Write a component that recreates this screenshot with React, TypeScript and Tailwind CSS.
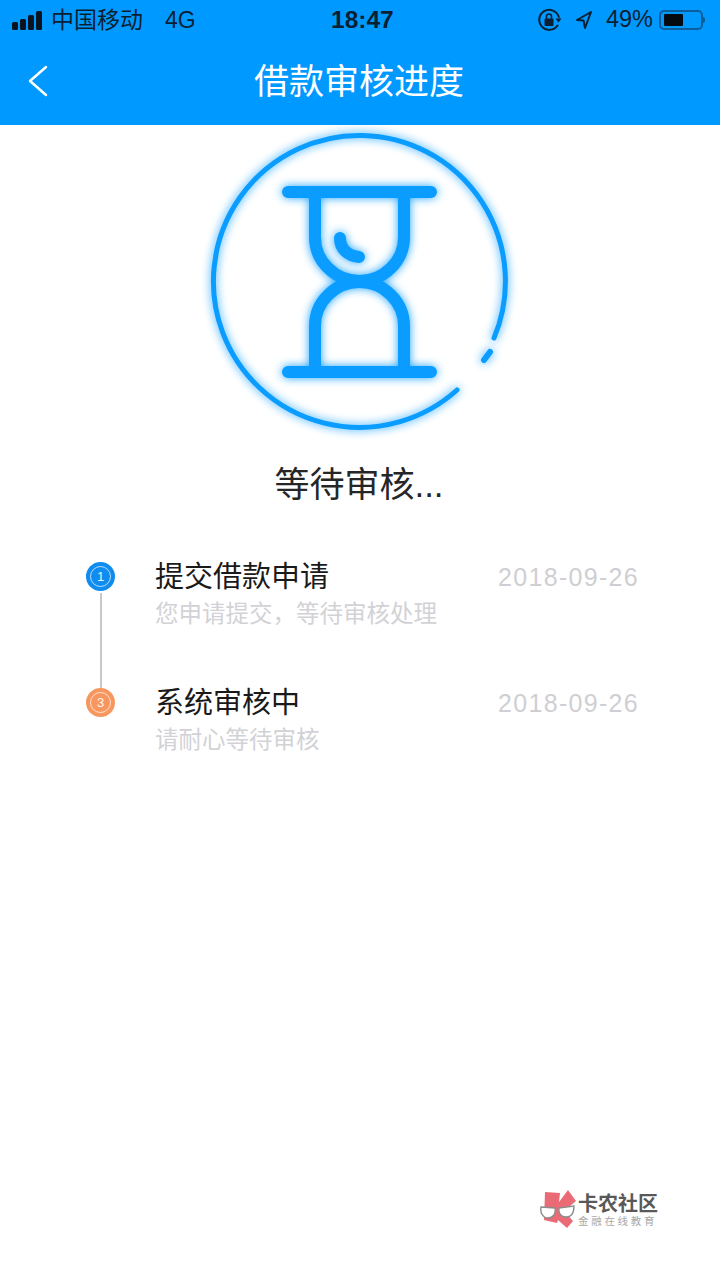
import React from "react";

const steps = [
  { n: "1", title: "提交借款申请", sub: "您申请提交，等待审核处理", date: "2018-09-26", color: "bg-[#0f8cf0]" },
  { n: "3", title: "系统审核中", sub: "请耐心等待审核", date: "2018-09-26", color: "bg-[#f7975f]" },
];

function StatusBar() {
  return (
    <div className="relative flex h-[40px] items-center pl-[12px] pr-[15px] text-[#0b1f33]">
      <div className="flex h-[19px] w-[32px] items-end gap-[2px]">
        <div className="h-[8px] w-[6px] rounded-[1.5px] bg-[#0a1420]" />
        <div className="h-[11px] w-[6px] rounded-[1.5px] bg-[#0a1420]" />
        <div className="h-[15px] w-[6px] rounded-[1.5px] bg-[#0a1420]" />
        <div className="h-[19px] w-[6px] rounded-[1.5px] bg-[#0a1420]" />
      </div>
      <span className="ml-[7px] text-[23px] leading-none">中国移动</span>
      <span className="ml-[22px] text-[23px] leading-none">4G</span>
      <span className="absolute left-[331px] text-[24.500px] font-bold leading-none">18:47</span>
      <div className="ml-auto flex items-center">
        <svg width="24" height="24" viewBox="0 0 24 24" fill="none" stroke="#0a1f33" strokeWidth="2">
          <path d="M19.500 17.500A10 10 0 1 1 20.800 9" strokeLinecap="round" />
          <path d="M17.500 10.500h6l-3 4z" fill="#0a1f33" stroke="none" />
          <rect x="6.500" y="10.500" width="9" height="7.500" rx="1" fill="#0a1f33" stroke="none" />
          <path d="M8.500 11V8.500a2.500 2.500 0 0 1 5 0V11" strokeWidth="1.600" />
        </svg>
        <svg className="ml-[13px]" width="18" height="20" viewBox="0 0 18 20" fill="none" stroke="#0a1f33" strokeWidth="2" strokeLinejoin="round">
          <path d="M16 2L2 10L8.500 10.500L10 18z" />
        </svg>
        <span className="ml-[13px] text-[23.500px] leading-none">49%</span>
        <div className="ml-[6px] flex h-[20px] w-[44px] items-center rounded-[5px] border-2 border-[#0b5f9c] px-[3px]">
          <div className="h-[12px] w-[19px] rounded-[1px] bg-[#050a10]" />
        </div>
        <div className="h-[6px] w-[2px] rounded-r-sm bg-[#0b5f9c]" />
      </div>
    </div>
  );
}

function Hourglass() {
  return (
    <svg
      className="drop-shadow-[0_0_5px_#1fa5ff]"
      width="320"
      height="320"
      viewBox="0 0 320 320"
      fill="none"
      stroke="#0a9dff"
      strokeLinecap="round"
    >
      <path d="M294 213A146 146 0 1 0 257 265" strokeWidth="5" />
      <path d="M284 235L290 227" strokeWidth="6" />
      <path d="M88 67H231M88 247H231" strokeWidth="12" />
      <path d="M115 67V112A44.500 44 0 0 0 204 112V67" strokeWidth="12" />
      <path d="M115 247V201A44.500 44 0 0 1 204 201V247" strokeWidth="12" />
      <path d="M140 113C140 124 148 131 159 132" strokeWidth="12" />
    </svg>
  );
}

function Logo() {
  return (
    <div className="mr-[62px] mt-auto mb-[48px] flex items-center self-end">
      <svg width="38" height="45" viewBox="5 0 38 45">
        <path d="M10 5L25 6L24 15L33 3L41 14L29 24L38 34L32 41L23 33L22 36L9 33z" fill="#ea6b76" />
        <path d="M6 20L20 21C21 27 18 31 13 31C8 31 5 26 6 20z" fill="#fff" stroke="#8c8c8c" strokeWidth="1.400" />
        <path d="M24 21L39 19C39 26 36 30 31 30C26 30 23 26 24 21z" fill="#fff" stroke="#8c8c8c" strokeWidth="1.400" />
      </svg>
      <div className="flex flex-col">
        <span className="text-[20px] font-bold leading-[22px] text-[#595959]">卡农社区</span>
        <span className="text-[10.500px] leading-[12px] tracking-[2.700px] text-[#a8a8a8]">金融在线教育</span>
      </div>
    </div>
  );
}

export default function App() {
  return (
    <div className="flex h-[1280px] w-[720px] flex-col overflow-hidden bg-white font-['Liberation_Sans','Noto_Sans_CJK_SC',sans-serif]">
      <header className="h-[125px] bg-[#0099ff]">
        <StatusBar />
        <div className="relative flex h-[85px] items-center justify-center pb-[2px]">
          <svg className="absolute left-[26px] top-[24px]" width="24" height="34" viewBox="0 0 24 34" fill="none" stroke="#fff" strokeWidth="2.500" strokeLinecap="round" strokeLinejoin="round">
            <path d="M20 3L4 17L20 31" />
          </svg>
          <h1 className="pr-[2px] text-[35px] font-normal leading-none text-white">借款审核进度</h1>
        </div>
      </header>

      <div className="flex justify-center">
        <Hourglass />
      </div>

      <p className="mt-[18px] pr-[2px] text-center text-[35px] leading-[44px] text-[#262626]">等待审核...</p>

      <div className="mt-[55px] flex flex-col pl-[86px] pr-[81px]">
        {steps.map((s, i) => (
          <div key={s.n} className="flex h-[126px]">
            <div className="flex w-[29px] flex-col items-center">
              <div className={`flex h-[29px] w-[29px] shrink-0 items-center justify-center rounded-full ${s.color}`}>
                <div className="flex h-[21px] w-[21px] items-center justify-center rounded-full border border-white/70 text-[13px] leading-none text-white/90">
                  {s.n}
                </div>
              </div>
              {i === 0 && <div className="mt-[2px] h-[95px] w-[2px] bg-[#c8c8c8]" />}
            </div>
            <div className="ml-[40px] flex-1">
              <div className="flex items-center justify-between">
                <span className="text-[29px] leading-[30px] text-[#1a1a1a]">{s.title}</span>
                <span className="text-[25px] leading-[30px] tracking-[1.300px] text-[#cfcfd3]">{s.date}</span>
              </div>
              <p className="mt-[6px] text-[23.500px] leading-[32px] text-[#d2d2d6]">{s.sub}</p>
            </div>
          </div>
        ))}
      </div>

      <Logo />
    </div>
  );
}
